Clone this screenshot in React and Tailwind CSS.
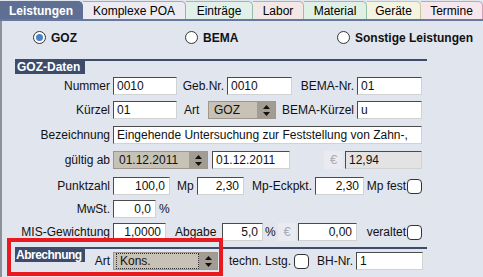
import React from "react";

function Input({ w, value, right, disabled }) {
  return (
    <div
      className={`${w} h-[18px] box-border border border-t-[#4b4b4b] border-l-[#4b4b4b] border-r-[#d2d2d2] border-b-[#d2d2d2] ${disabled ? "bg-[#e3e3e3]" : "bg-white"} flex items-center ${right ? "justify-end pr-[4px]" : "pl-[3px]"} text-[12px] leading-[16px] text-[#111] whitespace-nowrap overflow-hidden`}
    >
      {value}
    </div>
  );
}

function Arrows() {
  return (
    <svg width="7" height="11" viewBox="0 0 7 11">
      <polygon points="0,4 3.5,0 7,4" fill="#111" />
      <polygon points="0,7 7,7 3.5,11" fill="#111" />
    </svg>
  );
}

function Select({ w, value, focus, h = "h-[18px]" }) {
  return (
    <div className={`${w} ${h} box-border flex bg-[#c8c2b6] border border-[#9d978d] text-[12px] text-[#111]`}>
      <div className="flex-1 flex items-center pl-[2px] min-w-0">
        <div
          className={`h-full flex-1 flex items-center pl-[3px] ${focus ? "border border-dotted border-[#333]" : ""}`}
        >
          {value}
        </div>
      </div>
      <div className="w-[18px] bg-[#a29c92] flex items-center justify-center">
        <Arrows />
      </div>
    </div>
  );
}

function Check() {
  return <div className="w-[15px] h-[15px] box-border border border-[#333] rounded-[4px] bg-white" />;
}

function Label({ w, children, left, cls = "" }) {
  return (
    <div className={`${w} ${left ? "text-left" : "text-right pr-[3px]"} text-[12px] leading-[14px] text-[#111] whitespace-nowrap ${cls}`}>
      {children}
    </div>
  );
}

function Euro({ w }) {
  return (
    <div className={`${w} h-[18px] bg-[#e9ebf1] flex items-center justify-center text-[13px] text-[#a9acb3]`}>€</div>
  );
}

function Radio({ on, label }) {
  return (
    <div className="flex items-center gap-[5px]">
      <div className="w-[13px] h-[13px] box-border rounded-full border border-[#333] bg-white flex items-center justify-center">
        {on && <div className="w-[7px] h-[7px] rounded-full bg-[#4a82c3]" />}
      </div>
      <span className="text-[12px] font-bold text-[#111] leading-[14px]">{label}</span>
    </div>
  );
}

const tabs = [
  { label: "Leistungen", w: "w-[83px]", cls: "bg-[#5f6f93] text-white font-bold border-[#5f6f93]" },
  { label: "Komplexe POA", w: "w-[103px]", cls: "bg-[#ecebf1] border-[#a9a6b6]" },
  { label: "Einträge", w: "w-[67px]", cls: "bg-[#e2f0ea] border-[#93bfaa]" },
  { label: "Labor", w: "w-[51px]", cls: "bg-[#f2e8e5] border-[#c4aaa0]" },
  { label: "Material", w: "w-[63px]", cls: "bg-[#e0f0e6] border-[#93c2a3]" },
  { label: "Geräte", w: "w-[54px]", cls: "bg-[#f4f4e2] border-[#c8c893]" },
  { label: "Termine", w: "w-[62px]", cls: "bg-[#f6e7ed] border-[#cba3b5]" },
];

export default function App() {
  return (
    <div className="relative w-[483px] h-[277px] overflow-hidden bg-[#e1e5ee] [font-family:'Liberation_Sans',Arial,sans-serif] text-[12px]">
      {/* Tabs */}
      <div className="flex h-[21px] pt-[1px] border-b-2 border-[#66789b]">
        {tabs.map((t) => (
          <div
            key={t.label}
            className={`${t.w} h-[18px] box-border border-t border-r rounded-tr-[5px] flex items-center justify-center text-[12px] ${t.cls}`}
          >
            {t.label}
          </div>
        ))}
      </div>

      {/* Body */}
      <div className="border-l-2 border-[#8e9099] h-[256px]">
        {/* radio row */}
        <div className="flex items-center pt-[10px] h-[23px]">
          <div className="w-[183px] pl-[31px]"><Radio on label="GOZ" /></div>
          <div className="w-[152px]"><Radio label="BEMA" /></div>
          <div><Radio label="Sonstige Leistungen" /></div>
        </div>

        {/* GOZ-Daten header */}
        <div className="ml-[13px] mt-[15px] w-[412px] border-t-2 border-[#3e4c6c]">
          <div className="w-[70px] h-[13px] bg-[#3e4c6c] text-white font-bold text-[12px] leading-[13px] pl-[2px]">GOZ-Daten</div>
        </div>

        {/* Nummer */}
        <div className="flex items-center mt-[3px]">
          <Label w="w-[111px]">Nummer</Label>
          <Input w="w-[64px]" value="0010" />
          <Label w="w-[50px]">Geb.Nr.</Label>
          <Input w="w-[65px]" value="0010" />
          <Label w="w-[65px]">BEMA-Nr.</Label>
          <Input w="w-[65px]" value="01" />
        </div>

        {/* Kürzel */}
        <div className="flex items-center mt-[6px]">
          <Label w="w-[111px]">Kürzel</Label>
          <Input w="w-[64px]" value="01" />
          <Label w="w-[31px] pl-[7px]" left>Art</Label>
          <Select w="w-[68px]" value="GOZ" />
          <Label w="w-[81px]">BEMA-Kürzel</Label>
          <Input w="w-[65px]" value="u" />
        </div>

        {/* Bezeichnung */}
        <div className="flex items-center mt-[7px]">
          <Label w="w-[111px]">Bezeichnung</Label>
          <Input w="w-[309px]" value="Eingehende Untersuchung zur Feststellung von Zahn-," />
        </div>

        {/* gültig ab */}
        <div className="flex items-center mt-[7px]">
          <Label w="w-[111px]">gültig ab</Label>
          <Select w="w-[95px]" value="01.12.2011" />
          <div className="w-[4px]" />
          <Input w="w-[78px]" value="01.12.2011" />
          <div className="w-[34px]" />
          <Euro w="w-[19px]" />
          <div className="w-[2px]" />
          <Input w="w-[77px]" value="12,94" disabled />
        </div>

        {/* Punktzahl */}
        <div className="flex items-center mt-[8px]">
          <Label w="w-[111px]">Punktzahl</Label>
          <Input w="w-[57px]" value="100,0" right />
          <Label w="w-[27px] pl-[7px]" left>Mp</Label>
          <Input w="w-[47px]" value="2,30" right />
          <Label w="w-[71px]">Mp-Eckpkt.</Label>
          <Input w="w-[49px]" value="2,30" right />
          <Label w="w-[43px] !pr-[1px]">Mp fest</Label>
          <Check />
        </div>

        {/* MwSt */}
        <div className="flex items-center mt-[5px]">
          <Label w="w-[111px]">MwSt.</Label>
          <Input w="w-[43px]" value="0,0" right />
          <Label w="w-[20px] pl-[3px]" left>%</Label>
        </div>

        {/* MIS */}
        <div className="flex items-center mt-[5px]">
          <Label w="w-[111px]">MIS-Gewichtung</Label>
          <Input w="w-[53px]" value="1,0000" right />
          <Label w="w-[56px] pl-[9px]" left>Abgabe</Label>
          <Input w="w-[41px]" value="5,0" right />
          <Label w="w-[15px] pl-[2px]" left>%</Label>
          <Euro w="w-[18px]" />
          <div className="w-[2px]" />
          <Input w="w-[59px]" value="0,00" right />
          <Label w="w-[50px] !pr-[1px]">veraltet</Label>
          <Check />
        </div>

        {/* Abrechnung */}
        <div className="ml-[13px] mt-[6px] w-[412px] border-t-2 border-[#3e4c6c] flex items-start">
          <div className="w-[70px] h-[13px] bg-[#3e4c6c] text-white font-bold text-[12px] leading-[13px] pl-[1px] tracking-[-0.5px] whitespace-nowrap overflow-hidden">Abrechnung</div>
          <div className="flex items-center mt-[3px]">
            <Label w="w-[28px]">Art</Label>
            <Select w="w-[105px]" value="Kons." focus />
            <Label w="w-[76px]">techn. Lstg.</Label>
            <Check />
            <Label w="w-[47px]">BH-Nr.</Label>
            <Input w="w-[67px]" value="1" />
          </div>
        </div>
      </div>

      {/* red annotation box */}
      <div className="absolute left-[7px] top-[238px] w-[216px] h-[38px] border-4 border-[#e8191f]" />
    </div>
  );
}
